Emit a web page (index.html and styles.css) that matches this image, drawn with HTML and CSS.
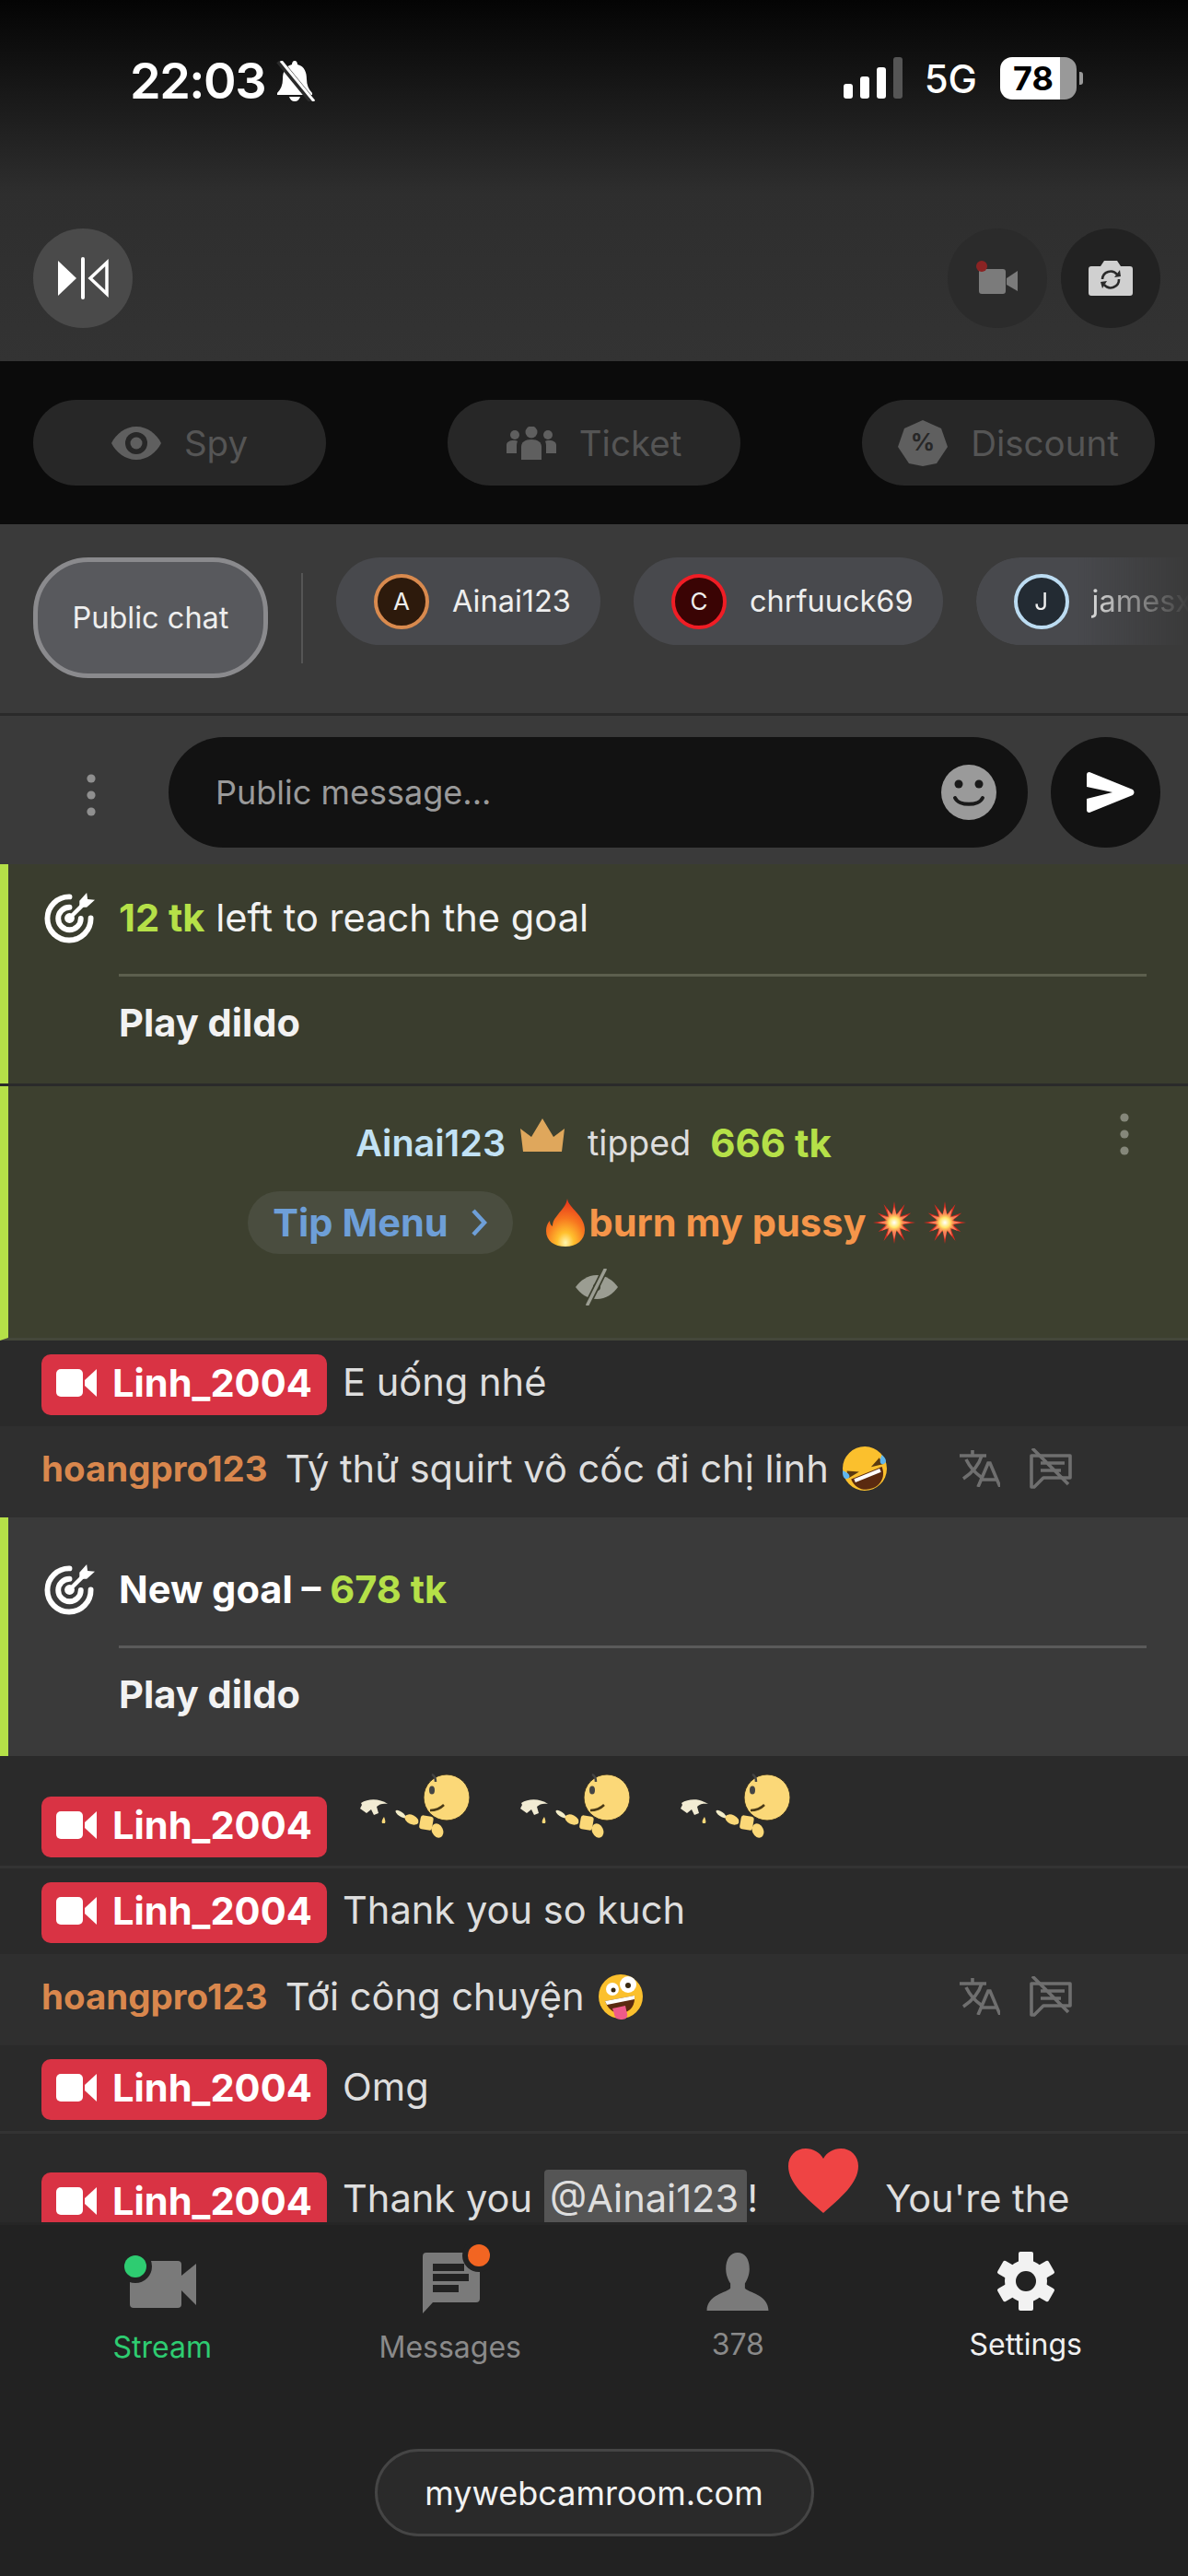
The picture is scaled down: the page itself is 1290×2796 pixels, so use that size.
FILE: index.html
```html
<!DOCTYPE html>
<html lang="en">
<head>
  <meta charset="UTF-8">
  <meta name="viewport" content="width=device-width, initial-scale=1.0">
  <title>Stream chat</title>
  <link rel="stylesheet" href="styles.css">
</head>
<body>
  <svg class="defs" width="0" height="0">
    <defs>
      <radialGradient id="g-burst">
        <stop offset="0" stop-color="#fff"/>
        <stop offset="0.5" stop-color="#ffe66b"/>
        <stop offset="1" stop-color="#ffb13c" stop-opacity="0"/>
      </radialGradient>
      <radialGradient id="g-fire" cx="0.5" cy="0.92" r="0.85">
        <stop offset="0" stop-color="#fff6b0"/>
        <stop offset="0.25" stop-color="#ffc02e"/>
        <stop offset="0.6" stop-color="#f7761f"/>
        <stop offset="1" stop-color="#e8391c"/>
      </radialGradient>
      <symbol id="i-target" viewBox="0 0 56 56">
        <path d="M28 4.5a24 24 0 1 0 23.5 23.500" fill="none" stroke="currentColor" stroke-width="6" stroke-linecap="round"/>
        <path d="M28 16a12.500 12.500 0 1 0 12.500 12.500" fill="none" stroke="currentColor" stroke-width="6" stroke-linecap="round"/>
        <circle cx="28" cy="28" r="5.500" fill="currentColor"/>
        <path d="M28 28 46 10" stroke="currentColor" stroke-width="4.5"/>
        <path d="M39 9 47 0l1 7 8 1-9 8h-8z" fill="currentColor"/>
      </symbol>
      <symbol id="i-cam" viewBox="0 0 44 34">
        <rect x="0" y="2" width="29" height="30" rx="5" fill="currentColor"/>
        <path d="M31 14 44 2v30L31 20z" fill="currentColor"/>
      </symbol>
      <symbol id="i-dots" viewBox="0 0 10 46">
        <circle cx="5" cy="5" r="4.600" fill="currentColor"/>
        <circle cx="5" cy="23" r="4.600" fill="currentColor"/>
        <circle cx="5" cy="41" r="4.600" fill="currentColor"/>
      </symbol>
      <symbol id="i-translate" viewBox="0 0 44 40">
        <path d="M0 6h29M14 0v6M24 6C21 16 13 25 4 31M7 10c4 8 9 14 16 19M20 40 31 14h2l11 26M24 32h16" fill="none" stroke="currentColor" stroke-width="3.6"/>
      </symbol>
      <symbol id="i-nochat" viewBox="0 0 48 44">
        <path d="M3 8h42v24H16L6 42H3z" fill="none" stroke="currentColor" stroke-width="3.6" stroke-linejoin="round"/>
        <path d="M13 16h26M13 24h22M4 0l39 39" fill="none" stroke="currentColor" stroke-width="3.6"/>
      </symbol>
      <symbol id="i-sticker" viewBox="0 0 120 70">
        <circle cx="95" cy="26" r="25" fill="#fbd878" stroke="#3a3220"/>
        <path d="M79 1c2 1 4 3 4 8" fill="none" stroke="#444" stroke-width="2.5"/>
        <ellipse cx="79" cy="18" rx="3" ry="4.500" fill="#444"/>
        <path d="M77 40c6 0 11-2 15-6" fill="none" stroke="#4a3a18" stroke-width="2.5"/>
        <ellipse cx="45" cy="44" rx="6.500" ry="2.500" fill="#f2ecc8" transform="rotate(35 45 44)"/>
        <ellipse cx="57" cy="50" rx="8" ry="5" fill="#fbd878" transform="rotate(25 57 50)"/>
        <rect x="66" y="46" width="14" height="15" rx="3" fill="#fbd878" transform="rotate(10 73 53)"/>
        <ellipse cx="85" cy="62" rx="6" ry="8" fill="#fbd878" transform="rotate(-25 85 62)"/>
        <path d="M2 32c8-5 20-5 29 1-5-1-9 0-12 3l2 7-5 2-3-6-5 4-7-5 2-4z" fill="#f2ecd4"/>
        <path d="M27 47c1 3 2 5 1 7h-3c-1-2 0-4 2-7z" fill="#fbd878"/>
      </symbol>
      <symbol id="i-burst" viewBox="0 0 46 46">
        <polygon points="23,0 25.300,14.300 34.500,3 29.400,16.600 41.200,12.500 31.700,20.700 46,23 31.700,25.300 40.300,33 29.400,29.400 34.500,42.900 25.300,31.700 23,46 20.700,31.700 11.500,42.900 16.600,29.400 5.700,33 14.300,25.300 0,23 14.300,20.700 4.800,12.500 16.600,16.600 11.500,3 20.700,14.300" fill="#d92b20"/>
        <polygon points="23,6 25.500,15 31,8 28.500,17.500 38,15 30,21 41,23 30,25 37,32 28.500,28.500 31,38 25.500,31 23,41 20.500,31 15,38 17.500,28.500 9,32 16,25 5,23 16,21 8,15 17.500,17.500 15,8 20.500,15" fill="#f4805c"/>
        <circle cx="23" cy="23" r="11" fill="url(#g-burst)"/>
      </symbol>
    </defs>
  </svg>

  <div class="app">
    <header class="top">
      <div class="status">
        <div class="status-left">
          <span class="time">22:03</span>
          <svg class="bell" viewBox="0 0 44 44">
            <path d="M22 0c2 0 3 2 3 4 8 2 10 9 10 16 0 6 2 11 6 15v2H3v-2c4-4 6-9 6-15 0-7 2-14 10-16 0-2 1-4 3-4zM16 39h12c-1 3-3 5-6 5s-5-2-6-5z" fill="#fff"/>
            <path d="M5 0l36 44" stroke="#2a2a2a" stroke-width="7"/>
            <path d="M7 0l36 44" stroke="#fff" stroke-width="3"/>
          </svg>
        </div>
        <div class="status-right">
          <div class="signal">
            <i class="b1"></i><i class="b2"></i><i class="b3"></i><i class="b4"></i>
          </div>
          <span class="net">5G</span>
          <div class="battery">78</div>
          <i class="nub"></i>
        </div>
      </div>
      <div class="tools">
        <button class="round light">
          <svg viewBox="0 0 56 46" width="56" height="46">
            <path d="M1 4l20 19L1 42z" fill="#fff"/>
            <rect x="26" y="0" width="4" height="46" rx="2" fill="#fff"/>
            <path d="M54 6v34L36 23z" fill="none" stroke="#fff" stroke-width="3.5"/>
          </svg>
        </button>
        <div class="tools-right">
          <button class="round dim">
            <svg viewBox="0 0 46 38" width="46" height="38">
              <rect x="3" y="9" width="29" height="27" rx="3" fill="#7b7b7b"/>
              <path d="M33 19l12-8v22l-12-7z" fill="#7b7b7b"/>
              <circle cx="6" cy="6" r="6" fill="#8b2323"/>
            </svg>
          </button>
          <button class="round dark">
            <svg viewBox="0 0 48 38" width="48" height="38">
              <path d="M3 6h10l4-6h14l4 6h10a3 3 0 0 1 3 3v26a3 3 0 0 1-3 3H3a3 3 0 0 1-3-3V9a3 3 0 0 1 3-3z" fill="#d0d0d0"/>
              <path d="M15 20a9 9 0 0 1 16-5M33 20a9 9 0 0 1-16 6" fill="none" stroke="#2a2a2a" stroke-width="2.6"/>
              <path d="M28 18l7-1-1-7zM20 22l-7 1 2 7z" fill="#2a2a2a"/>
            </svg>
          </button>
        </div>
      </div>
    </header>

    <section class="actions">
      <div class="action">
        <svg viewBox="0 0 54 36" width="54" height="36">
          <path d="M27 0c12 0 22 8 27 18-5 10-15 18-27 18S5 28 0 18C5 8 15 0 27 0z" fill="#5f5f5f"/>
          <circle cx="27" cy="18" r="12" fill="#272727"/>
          <circle cx="27" cy="18" r="6.500" fill="#5f5f5f"/>
        </svg>
        <span>Spy</span>
      </div>
      <div class="action">
        <svg viewBox="0 0 54 36" width="54" height="36">
          <circle cx="27" cy="6" r="6.500" fill="#5f5f5f"/>
          <circle cx="9" cy="9" r="5" fill="#5f5f5f"/>
          <circle cx="45" cy="9" r="5" fill="#5f5f5f"/>
          <path d="M16 36V22c0-5 4-8 11-8s11 3 11 8v14z" fill="#5f5f5f"/>
          <path d="M0 29V20c0-3 3-5 8-5 2 0 3 0 4 1-1 2-1 4-1 6v7zM54 29V20c0-3-3-5-8-5-2 0-3 0-4 1 1 2 1 4 1 6v7z" fill="#5f5f5f"/>
        </svg>
        <span>Ticket</span>
      </div>
      <div class="action">
        <svg viewBox="0 0 54 50" width="54" height="50">
          <path d="M27 0l20 9 7 20-12 18-15 3-15-3L0 29 7 9z" fill="#5f5f5f"/>
          <text x="27" y="33" text-anchor="middle" class="pct">%</text>
        </svg>
        <span>Discount</span>
      </div>
    </section>

    <nav class="tabs">
      <div class="tab-main">Public chat</div>
      <i class="tab-sep"></i>
      <div class="tab">
        <span class="avatar a-orange">A</span>Ainai123
      </div>
      <div class="tab">
        <span class="avatar a-red">C</span>chrfuuck69
      </div>
      <div class="tab tab-fade">
        <span class="avatar a-blue">J</span>jamesx99
      </div>
    </nav>

    <section class="composer">
      <svg class="more" width="10" height="46"><use href="#i-dots"/></svg>
      <div class="input">
        <span>Public message...</span>
        <svg viewBox="0 0 60 60" width="60" height="60">
          <circle cx="30" cy="30" r="30" fill="#9a9a9a"/>
          <circle cx="19" cy="21" r="4.500" fill="#1a1a1a"/>
          <circle cx="41" cy="21" r="4.500" fill="#1a1a1a"/>
          <path d="M15 36c4 9 26 9 30 0" fill="none" stroke="#1a1a1a" stroke-width="4" stroke-linecap="round"/>
        </svg>
      </div>
      <button class="send">
        <svg viewBox="0 0 52 44" width="52" height="44">
          <path d="M3 0 50 19q3 3 0 6L3 44q-3 0-3-3V29l28-7L0 16V3q0-3 3-3z" fill="#fff"/>
        </svg>
      </button>
    </section>

    <main class="chat">
      <div class="goal goal-green">
        <div class="goal-head">
          <svg class="goal-icon" width="55" height="55"><use href="#i-target"/></svg>
          <div><b class="tk">12 tk</b> left to reach the goal</div>
        </div>
        <div class="goal-task">Play dildo</div>
      </div>

      <div class="tip">
        <svg class="tip-more" width="10" height="46"><use href="#i-dots"/></svg>
        <div class="tip-line">
          <b class="tipper">Ainai123</b>
          <svg class="crown" viewBox="0 0 48 36" width="48" height="36">
            <path d="M0 11l12 9L24 0l12 20 12-9-3 25H3z" fill="#dfa75c"/>
          </svg>
          <span class="tipped">tipped</span>
          <b class="tk tk-big">666 tk</b>
        </div>
        <div class="tip-line tip-second">
          <div class="tip-menu">Tip Menu
            <svg viewBox="0 0 18 30" width="18" height="30">
              <path d="M3 2l12 13L3 28" fill="none" stroke="currentColor" stroke-width="4.500"/>
            </svg>
          </div>
          <svg class="fire" viewBox="0 0 42 52" width="42" height="52">
            <path d="M23 0c1 10 19 18 19 34 0 11-9 18-21 18S0 46 0 35c0-4 1-8 4-11 0 3 1 5 3 6 0-6 3-9 6-13 4-5 9-10 10-17z" fill="url(#g-fire)"/>
          </svg>
          <b class="goal-name">burn my pussy</b>
          <svg class="burst" width="46" height="46"><use href="#i-burst"/></svg>
          <svg class="burst" width="46" height="46"><use href="#i-burst"/></svg>
        </div>
        <svg class="hidden-eye" viewBox="0 0 48 40" width="48" height="40">
          <path d="M24 7c10 0 18 6 23 13-5 7-13 13-23 13S6 27 1 20C6 13 14 7 24 7z" fill="#9b9d92"/>
          <circle cx="24" cy="20" r="4" fill="#3d402f"/>
          <path d="M33 1 14 39" stroke="#3d402f" stroke-width="7"/>
          <path d="M33 1 14 39" stroke="#9b9d92" stroke-width="3.5" stroke-linecap="round"/>
        </svg>
      </div>

      <div class="row">
        <div class="badge"><svg width="44" height="34"><use href="#i-cam"/></svg>Linh_2004</div>
        <span class="msg">E uống nhé</span>
      </div>

      <div class="row row-user">
        <b class="user">hoangpro123</b>
        <span class="msg">Tý thử squirt vô cốc đi chị linh</span>
        <svg class="emoji" viewBox="0 0 50 50" width="50" height="50">
          <g transform="rotate(-22 25 25)">
            <circle cx="25" cy="25" r="24" fill="#fbc02d"/>
            <path d="M6 20l12 6-13 2zM44 20l-12 6 13 2z" fill="#5a3a10"/>
            <path d="M7 30h36c0 11-8 18-18 18S7 41 7 30z" fill="#5a2a10"/>
            <path d="M10 31h30v4H10z" fill="#fff"/>
            <path d="M2 18c-3 6-2 10 2 10s4-5-2-10zM48 18c3 6 2 10-2 10s-4-5 2-10z" fill="#5fb6ee"/>
          </g>
        </svg>
        <div class="row-tools">
          <svg width="44" height="40"><use href="#i-translate"/></svg>
          <svg width="48" height="44"><use href="#i-nochat"/></svg>
        </div>
      </div>

      <div class="goal goal-grey">
        <div class="goal-head">
          <svg class="goal-icon" width="55" height="55"><use href="#i-target"/></svg>
          <div><b class="strong">New goal – </b><b class="tk">678 tk</b></div>
        </div>
        <div class="goal-task">Play dildo</div>
      </div>

      <div class="row row-sticker">
        <div class="badge"><svg width="44" height="34"><use href="#i-cam"/></svg>Linh_2004</div>
        <div class="stickers">
          <svg width="120" height="70"><use href="#i-sticker"/></svg>
          <svg width="120" height="70"><use href="#i-sticker"/></svg>
          <svg width="120" height="70"><use href="#i-sticker"/></svg>
        </div>
      </div>

      <div class="row">
        <div class="badge"><svg width="44" height="34"><use href="#i-cam"/></svg>Linh_2004</div>
        <span class="msg">Thank you so kuch</span>
      </div>

      <div class="row row-user">
        <b class="user">hoangpro123</b>
        <span class="msg">Tới công chuyện</span>
        <svg class="emoji zany" viewBox="0 0 50 50" width="50" height="50">
          <circle cx="25" cy="25" r="24" fill="#fbc02d"/>
          <circle cx="16" cy="17" r="7" fill="#fff"/>
          <circle cx="33" cy="12" r="9" fill="#fff"/>
          <circle cx="17" cy="18" r="2.500" fill="#3a2a10"/>
          <circle cx="33" cy="13" r="3" fill="#3a2a10"/>
          <path d="M8 30l32-6c1 10-4 18-14 19-9 1-15-5-18-13z" fill="#5a2a10"/>
          <path d="M8 30l32-6v4L10 34z" fill="#fff"/>
          <path d="M16 38l14-3 2 9c1 5-3 6-7 6s-7-3-7-6z" fill="#ef5a8a"/>
        </svg>
        <div class="row-tools">
          <svg width="44" height="40"><use href="#i-translate"/></svg>
          <svg width="48" height="44"><use href="#i-nochat"/></svg>
        </div>
      </div>

      <div class="row row-sep">
        <div class="badge"><svg width="44" height="34"><use href="#i-cam"/></svg>Linh_2004</div>
        <span class="msg">Omg</span>
      </div>

      <div class="row row-last">
        <div class="badge"><svg width="44" height="34"><use href="#i-cam"/></svg>Linh_2004</div>
        <span class="msg">Thank you</span>
        <span class="mention">@Ainai123</span>
        <span class="msg bang">!</span>
        <svg class="heart" viewBox="0 0 76 70" width="76" height="70">
          <path d="M38 70C20 54 0 38 0 19 0 8 8 0 19 0c8 0 15 4 19 11C42 4 49 0 57 0c11 0 19 8 19 19 0 19-20 35-38 51z" fill="#ef4444"/>
        </svg>
        <span class="msg">You're the</span>
      </div>
    </main>

    <footer class="bottom">
      <div class="nav">
        <div class="nav-item green">
          <div class="nav-icon">
            <svg class="ic-stream" viewBox="0 0 78 57" width="78" height="57">
              <rect x="6" y="6" width="56" height="51" rx="4" fill="#7a7a7a"/>
              <path d="M62 22 78 9v45L62 38z" fill="#7a7a7a"/>
              <circle cx="12" cy="12" r="18" fill="#222"/>
              <circle cx="12" cy="12" r="12" fill="#2ecc71"/>
            </svg>
          </div>
          <span>Stream</span>
        </div>
        <div class="nav-item">
          <div class="nav-icon">
            <svg class="ic-msg" viewBox="0 0 73 75" width="73" height="75">
              <path d="M4 9h54a4 4 0 0 1 4 4v46a4 4 0 0 1-4 4H11L0 75V13a4 4 0 0 1 4-4z" fill="#7a7a7a"/>
              <path d="M11 21h34v8H11zM11 32h39v8H11zM11 44h28v8H11z" fill="#222"/>
              <circle cx="61" cy="12" r="18" fill="#222"/>
              <circle cx="61" cy="12" r="12" fill="#f26522"/>
            </svg>
          </div>
          <span>Messages</span>
        </div>
        <div class="nav-item small">
          <div class="nav-icon">
            <svg class="ic-small" viewBox="0 0 68 64" width="68" height="63">
              <path d="M34 0c8 0 13 7 13 18 0 7-3 13-5 16v5c3 5 26 7 26 25H0c0-18 23-20 26-25v-5c-2-3-5-9-5-16C21 7 26 0 34 0z" fill="#7a7a7a"/>
            </svg>
          </div>
          <span>378</span>
        </div>
        <div class="nav-item white small">
          <div class="nav-icon">
            <svg class="ic-small" viewBox="-32 -32 64 64" width="64" height="64">
              <g fill="#f2f2f2">
                <rect x="-8" y="-32" width="16" height="64" rx="2"/>
                <rect x="-8" y="-32" width="16" height="64" rx="2" transform="rotate(60)"/>
                <rect x="-8" y="-32" width="16" height="64" rx="2" transform="rotate(120)"/>
                <circle r="23"/>
              </g>
              <circle r="11" fill="#222"/>
            </svg>
          </div>
          <span>Settings</span>
        </div>
      </div>
      <div class="domain">mywebcamroom.com</div>
    </footer>
  </div>
</body>
</html>
```

FILE: styles.css
```css
* {
  box-sizing: border-box;
}
html, body {
  margin: 0;
  padding: 0;
  background: #222;
}
body {
  font-family: Inter, "Noto Sans", sans-serif;
  color: #e6e6e6;
}
.defs {
  position: absolute;
}
svg {
  display: block;
  flex-shrink: 0;
}
button {
  border: 0;
  padding: 0;
}
.app {
  width: 1290px;
  height: 2796px;
  display: flex;
  flex-direction: column;
  overflow: hidden;
}

/* status bar and camera tools */
.top {
  height: 392px;
  background: linear-gradient(#040404 0, #2e2e2e 210px, #333 392px);
  padding: 62px 30px 0 36px;
}
.status {
  height: 186px;
  display: flex;
  justify-content: space-between;
  color: #fff;
}
.status-left {
  display: flex;
  align-items: flex-start;
  gap: 10px;
  padding-left: 105px;
}
.time {
  font-size: 54px;
  font-weight: 600;
  line-height: 52px;
  letter-spacing: -1.5px;
}
.bell {
  width: 44px;
  height: 44px;
  margin-top: 4px;
}
.status-right {
  display: flex;
  align-items: flex-start;
  padding-right: 84px;
}
.signal {
  display: flex;
  align-items: flex-end;
  gap: 8px;
  height: 45px;
  margin-right: 24px;
}
.signal i {
  width: 10px;
  border-radius: 3px;
  background: #fff;
}
.signal .b1 { height: 16px; }
.signal .b2 { height: 24px; }
.signal .b3 { height: 34px; }
.signal .b4 { height: 45px; background: #555; }
.net {
  font-size: 42px;
  font-weight: 500;
  line-height: 48px;
  margin-right: 25px;
}
.battery {
  width: 83px;
  height: 46px;
  border-radius: 13px;
  background: linear-gradient(to right, #fff 78%, #999 78%);
  color: #000;
  font-size: 36px;
  font-weight: 700;
  line-height: 46px;
  padding-left: 14px;
}
.nub {
  width: 4px;
  height: 14px;
  margin: 16px 0 0 3px;
  border-radius: 0 3px 3px 0;
  background: #999;
}
.tools {
  display: flex;
  justify-content: space-between;
}
.tools-right {
  display: flex;
  gap: 15px;
}
.round {
  width: 108px;
  height: 108px;
  border-radius: 50%;
  display: flex;
  align-items: center;
  justify-content: center;
}
.round.light { background: #4a4a4a; }
.round.dim { background: #2b2b2b; }
.round.dark { background: #222; }

/* spy / ticket / discount */
.actions {
  height: 177px;
  background: #0b0b0b;
  display: flex;
  justify-content: space-between;
  padding: 42px 36px 0;
}
.action {
  width: 318px;
  height: 93px;
  border-radius: 47px;
  background: #272727;
  display: flex;
  align-items: center;
  justify-content: center;
  gap: 25px;
  font-size: 38.5px;
  color: #555;
}
.pct {
  font-family: Inter, sans-serif;
  font-size: 26px;
  font-weight: 700;
  fill: #272727;
}

/* chat tabs */
.tabs {
  height: 208px;
  background: #3a3a3a;
  border-bottom: 3px solid #2a2a2a;
  display: flex;
  align-items: flex-start;
  gap: 36px;
  padding: 36px 0 0 36px;
  overflow: hidden;
  font-size: 32.5px;
  color: #eee;
}
.tab-main {
  width: 255px;
  height: 131px;
  border-radius: 60px;
  border: 5px solid #8a8a8d;
  background: #58595d;
  display: flex;
  align-items: center;
  justify-content: center;
  flex-shrink: 0;
}
.tab-sep {
  width: 2px;
  height: 98px;
  margin-top: 17px;
  background: #555;
  flex-shrink: 0;
}
.tab {
  height: 95px;
  border-radius: 48px;
  background: #48494d;
  display: flex;
  align-items: center;
  gap: 25px;
  padding: 0 32px 0 41px;
  flex-shrink: 0;
  white-space: nowrap;
}
.tab-fade {
  width: 320px;
  -webkit-mask-image: linear-gradient(to right, #000 110px, transparent 232px);
  mask-image: linear-gradient(to right, #000 110px, transparent 232px);
}
.avatar {
  width: 60px;
  height: 60px;
  border-radius: 50%;
  border: 4px solid;
  display: flex;
  align-items: center;
  justify-content: center;
  font-size: 26px;
}
.a-orange { border-color: #d98a4e; background: #2d1a0c; }
.a-red { border-color: #f01d25; background: #3a0404; }
.a-blue { border-color: #bcdcf2; background: #232b33; }

/* message input */
.composer {
  height: 161px;
  background: #3a3a3a;
  display: flex;
  align-items: center;
  padding: 5px 30px 0 94px;
}
.more {
  color: #8f8f8f;
  margin: 6px 79px 0 0;
}
.input {
  width: 933px;
  height: 120px;
  border-radius: 60px;
  background: #121212;
  display: flex;
  align-items: center;
  justify-content: space-between;
  padding: 0 34px 0 51px;
  font-size: 36px;
  color: #9a9a9a;
}
.send {
  width: 119px;
  height: 120px;
  margin-left: 25px;
  padding-left: 10px;
  border-radius: 50%;
  background: #121212;
  display: flex;
  align-items: center;
  justify-content: center;
}

/* chat list */
.chat {
  height: 1474px;
  overflow: hidden;
  background: #2a2a2a;
  font-size: 41.6px;
  line-height: 56px;
}
.goal {
  border-left: 9px solid #b5e048;
  padding-right: 45px;
  color: #f2f2f2;
}
.goal-green {
  height: 238px;
  padding-top: 30px;
  background: #3a3d2e;
}
.goal-grey {
  height: 259px;
  padding-top: 50px;
  background: #3a3a3a;
  border-bottom: 0;
}
.goal-head {
  display: flex;
  align-items: center;
  gap: 26px;
  padding-left: 39px;
}
.goal-icon {
  color: #fff;
}
.tk {
  color: #b5e048;
  font-weight: 700;
}
.tk-big {
  font-size: 42px;
}
.strong {
  color: #fff;
  font-weight: 700;
}
.goal-task {
  margin: 33px 0 0 120px;
  padding-top: 22px;
  border-top: 3px solid #5c5f4e;
  font-weight: 700;
}
.goal-grey .goal-task {
  border-top-color: #5a5a5a;
}

.tip {
  position: relative;
  height: 276px;
  margin-top: 3px;
  padding-top: 34px;
  border-left: 9px solid #b5e048;
  border-bottom: 3px solid #44473a;
  background: #3d402f;
}
.tip-more {
  position: absolute;
  right: 64px;
  top: 29px;
  color: #85877a;
}
.tip-line {
  display: flex;
  align-items: center;
  justify-content: center;
  padding-right: 10px;
}
.tipper {
  font-size: 39.5px;
  color: #c2e2f5;
  font-weight: 600;
}
.crown {
  margin: -18px 25px 0 16px;
}
.tipped {
  font-size: 37.5px;
  color: #ddd;
  margin-right: 21px;
}
.tip-second {
  margin-top: 24px;
  padding-left: 28px;
}
.tip-menu {
  width: 288px;
  height: 68px;
  border-radius: 34px;
  background: #4a4d3f;
  color: #6e9fd8;
  font-weight: 700;
  display: flex;
  align-items: center;
  justify-content: center;
  gap: 24px;
  margin-right: 36px;
}
.fire {
  margin-right: 5px;
}
.goal-name {
  color: #f5954a;
  font-weight: 700;
  margin-right: 7px;
}
.burst {
  margin-right: 9px;
}
.burst:last-child {
  margin-right: 0;
}
.hidden-eye {
  margin: 16px 0 0 615px;
}

.row {
  height: 93px;
  display: flex;
  align-items: center;
  padding: 3px 0 0 45px;
  white-space: nowrap;
  background: #2a2a2a;
}
.row-user {
  height: 99px;
  padding: 0 0 7px 45px;
  background: #2f2f2f;
}
.row-sticker {
  height: 116px;
  align-items: flex-start;
  padding-top: 41px;
  margin-top: 3px;
  margin-bottom: 3px;
}
.row-sep {
  margin-bottom: 3px;
}
.row-last {
  height: 100px;
  align-items: flex-start;
  padding-top: 42px;
}
.chat > .row-sep,
.chat > .row-sticker {
  box-shadow: 0 3px 0 #333;
}
.badge {
  width: 310px;
  height: 66px;
  border-radius: 10px;
  background: #d93344;
  color: #fff;
  font-weight: 700;
  display: flex;
  align-items: center;
  gap: 17px;
  padding: 0 0 4px 16px;
  margin-right: 17px;
}
.msg {
  color: #dedede;
  margin-bottom: 6px;
}
.row-user .msg {
  margin-bottom: 0;
}
.user {
  font-size: 38.5px;
  color: #d9874d;
  font-weight: 700;
  margin-right: 19px;
}
.emoji {
  margin-left: 14px;
}
.row-tools {
  position: absolute;
  left: 1042px;
  display: flex;
  align-items: center;
  gap: 31px;
  color: #6f6f6f;
}
.stickers {
  display: flex;
  gap: 54px;
  margin: -25px 0 0 18px;
}
.mention {
  height: 70px;
  margin: -3px 0 0 13px;
  padding: 3px 9px 0 6px;
  border-radius: 4px;
  background: #555;
  color: #dedede;
}
.heart {
  margin: -26px 29px 0 33px;
}

/* bottom nav */
.bottom {
  flex: 1;
  background: #222;
  border-top: 3px solid #262626;
  position: relative;
  z-index: 1;
  padding: 21px 20px 0;
}
.nav {
  display: grid;
  grid-template-columns: repeat(4, 1fr);
}
.nav-item {
  display: flex;
  flex-direction: column;
  align-items: center;
  gap: 13px;
  font-size: 32px;
  line-height: 48px;
  color: #8a8a8a;
}
.nav-icon {
  height: 75px;
  display: flex;
  align-items: flex-end;
}
.ic-stream {
  margin: 0 4px 6px 0;
}
.ic-msg {
  margin-left: 13px;
}
.ic-small {
  margin-bottom: 3px;
}
.nav-item.small {
  gap: 10px;
}
.nav-item.green { color: #2ecc71; }
.nav-item.white { color: #f0f0f0; }
.domain {
  width: 477px;
  height: 95px;
  margin: 86px auto 0;
  border-radius: 48px;
  border: 3px solid #454545;
  background: #2a2a2a;
  display: flex;
  align-items: center;
  justify-content: center;
  font-size: 36px;
  color: #f2f2f2;
}
```
